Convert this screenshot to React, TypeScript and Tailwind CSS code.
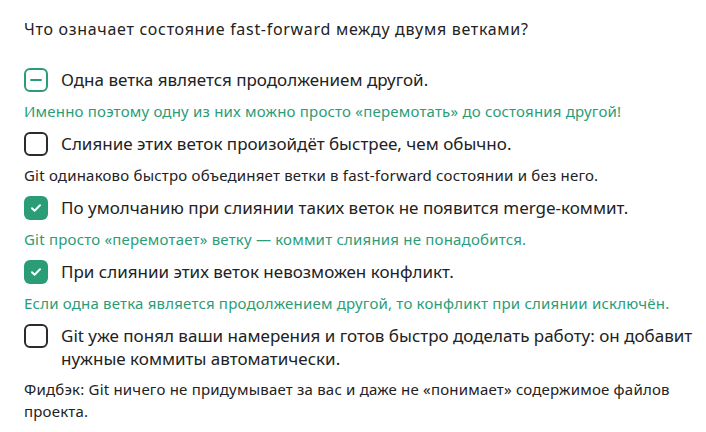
const options = [
  {
    text: "Одна ветка является продолжением другой.",
    state: "partial",
    note: "Именно поэтому одну из них можно просто «перемотать» до состояния другой!",
    ok: true,
  },
  {
    text: "Слияние этих веток произойдёт быстрее, чем обычно.",
    state: "empty",
    note: "Git одинаково быстро объединяет ветки в fast-forward состоянии и без него.",
    ok: false,
  },
  {
    text: "По умолчанию при слиянии таких веток не появится merge-коммит.",
    state: "checked",
    note: "Git просто «перемотает» ветку — коммит слияния не понадобится.",
    ok: true,
  },
  {
    text: "При слиянии этих веток невозможен конфликт.",
    state: "checked",
    note: "Если одна ветка является продолжением другой, то конфликт при слиянии исключён.",
    ok: true,
  },
  {
    text: "Git уже понял ваши намерения и готов быстро доделать работу: он добавит нужные коммиты автоматически.",
    state: "empty",
    note: "Фидбэк: Git ничего не придумывает за вас и даже не «понимает» содержимое файлов проекта.",
    ok: false,
  },
];

const Box = ({ state }: { state: string }) => {
  if (state === "checked") {
    return (
      <span className="w-6 h-6 shrink-0 rounded-md bg-[#2a9d77] flex items-center justify-center">
        <svg width="12" height="10" viewBox="0 0 12 10" fill="none">
          <path d="M2 5.2l2.6 2.5L10 2.3" stroke="white" strokeWidth="2" strokeLinecap="round" strokeLinejoin="round" />
        </svg>
      </span>
    );
  }
  if (state === "partial") {
    return (
      <span className="w-6 h-6 shrink-0 rounded-md border-2 border-[#2a9d77] flex items-center justify-center">
        <span className="w-3 h-[2px] bg-[#2a9d77] rounded" />
      </span>
    );
  }
  return <span className="w-6 h-6 shrink-0 rounded-md border-2 border-[#2b2b2b]" />;
};

export default function App() {
  return (
    <div className="min-h-screen bg-white pl-6 pr-1 pt-[17px] text-[#222] font-['Noto_Sans',sans-serif]">
      <h1 className="text-base tracking-[0.7px] leading-6 mb-[27px]">
        Что означает состояние fast-forward между двумя ветками?
      </h1>

      <div className="flex flex-col">
        {options.map((o, i) => (
          <div key={i} className="mb-[10px]">
            <label className="flex gap-[13px] items-start">
              <Box state={o.state} />
              <span className="text-[17px] leading-[23px]">{o.text}</span>
            </label>
            <p
              className={
                "text-[15px] tracking-[0.2px] leading-[22px] mt-[8px] " +
                (o.ok ? "text-[#2a9d77]" : "text-[#222]")
              }
            >
              {o.note}
            </p>
          </div>
        ))}
      </div>
    </div>
  );
}
